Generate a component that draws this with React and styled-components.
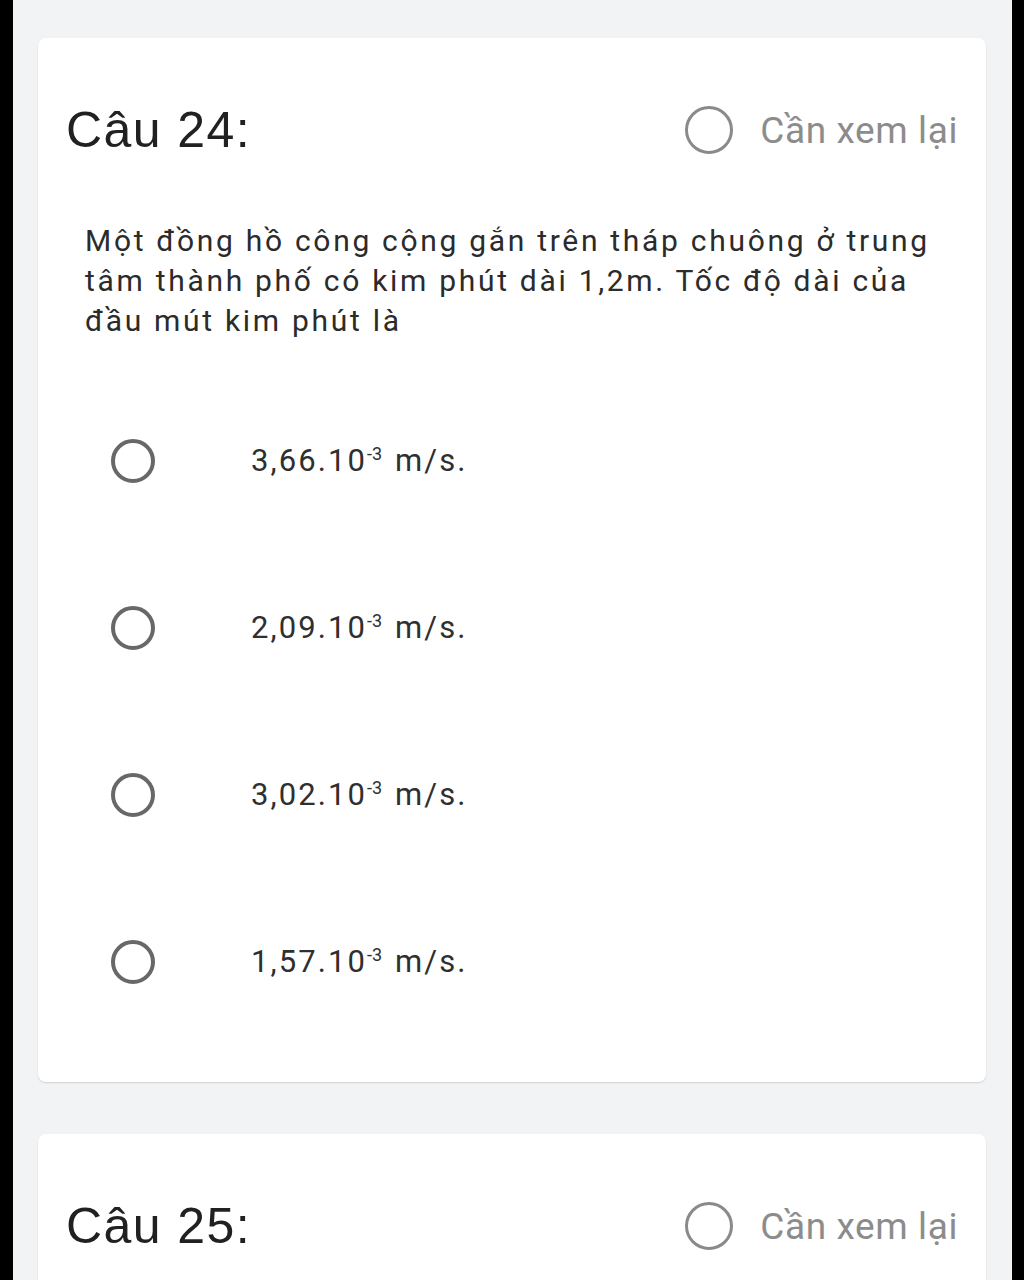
import React from "react";
import styled, { createGlobalStyle } from "styled-components";

const GlobalStyle = createGlobalStyle`
  html, body {
    margin: 0;
    padding: 0;
    background: #000;
  }
  body {
    font-family: Roboto, "Noto Sans", sans-serif;
  }
`;

const Frame = styled.div`
  margin: 0 12px 0 13px;
  height: 1280px;
  background: #f2f3f5;
  padding: 38px 26px 0 25px;
  box-sizing: border-box;
  display: flex;
  flex-direction: column;
  gap: 52px;
  overflow: hidden;
`;

const Card = styled.section`
  background: #fff;
  border-radius: 8px;
  box-shadow: 0 1px 2px rgba(0, 0, 0, 0.14);
  padding: 62px 28px 37px 28px;
  flex-shrink: 0;
`;

const Header = styled.div`
  height: 60px;
  display: flex;
  align-items: center;
  justify-content: space-between;
`;

const Title = styled.h2`
  margin: 0;
  font-family: "Liberation Sans", Arial, sans-serif;
  font-weight: 400;
  font-size: 50px;
  letter-spacing: 1.4px;
  color: #212121;
`;

const Review = styled.label`
  display: flex;
  align-items: center;
  gap: 27px;
  font-size: 37px;
  letter-spacing: 0.6px;
  color: #8c8c8c;
`;

const Ring = styled.span`
  box-sizing: border-box;
  display: inline-block;
  width: ${(p) => p.$size}px;
  height: ${(p) => p.$size}px;
  border-radius: 50%;
  border: ${(p) => p.$stroke}px solid ${(p) => p.$color};
  flex-shrink: 0;
`;

const Question = styled.p`
  margin: 61px 0 0 19px;
  font-size: 30px;
  letter-spacing: 2.7px;
  line-height: 40px;
  color: #2b2b2b;
`;

const Options = styled.div`
  margin-top: 36px;
  display: flex;
  flex-direction: column;
`;

const Option = styled.div`
  height: 167px;
  display: flex;
  align-items: center;
  padding-left: 45px;
`;

const OptionText = styled.span`
  margin-left: 96px;
  font-size: 31px;
  letter-spacing: 2.1px;
  color: #2f2f2f;
`;

const Sup = styled.sup`
  font-size: 18px;
  letter-spacing: 0;
  vertical-align: 11px;
  line-height: 0;
  margin: 0 3px 0 0;
`;

const options = [
  ["3,66.10", "-3", " m/s."],
  ["2,09.10", "-3", " m/s."],
  ["3,02.10", "-3", " m/s."],
  ["1,57.10", "-3", " m/s."],
];

function ReviewToggle() {
  return (
    <Review>
      <Ring $size={48} $stroke={3.5} $color="#8a8a8a" />
      Cần xem lại
    </Review>
  );
}

export default function App() {
  return (
    <>
      <GlobalStyle />
      <Frame>
        <Card>
          <Header>
            <Title>Câu 24:</Title>
            <ReviewToggle />
          </Header>
          <Question>
            Một đồng hồ công cộng gắn trên tháp chuông ở trung tâm thành phố có
            kim phút dài 1,2m. Tốc độ dài của đầu mút kim phút là
          </Question>
          <Options>
            {options.map(([base, exp, unit]) => (
              <Option key={base}>
                <Ring $size={44} $stroke={4.5} $color="#686868" />
                <OptionText>
                  {base}
                  <Sup>{exp}</Sup>
                  {unit}
                </OptionText>
              </Option>
            ))}
          </Options>
        </Card>
        <Card>
          <Header>
            <Title>Câu 25:</Title>
            <ReviewToggle />
          </Header>
        </Card>
      </Frame>
    </>
  );
}
